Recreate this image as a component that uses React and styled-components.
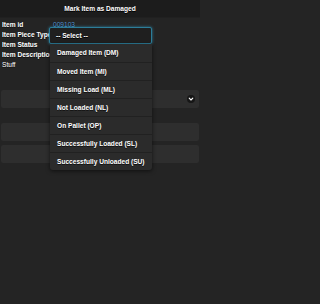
import React from 'react';
import styled, { createGlobalStyle } from 'styled-components';

const GlobalStyle = createGlobalStyle`
  html, body {
    margin: 0;
    padding: 0;
    background: #242424;
  }
  body {
    font-family: 'Liberation Sans', Arial, sans-serif;
    color: #ffffff;
  }
`;

const Page = styled.div`
  position: relative;
  width: 200px;
  min-height: 304px;
  background: #242424;
  overflow: hidden;
`;

const Header = styled.div`
  height: 17px;
  line-height: 18px;
  background: #1c1c1c;
  border-bottom: 1px solid #202020;
  text-align: center;
  font-size: 6.6px;
  font-weight: bold;
  text-shadow: 0 1px 0 #000;
`;

const Fields = styled.div`
  display: flex;
  flex-direction: column;
  padding: 2px 2px 0;
`;

const Row = styled.div`
  display: grid;
  grid-template-columns: ${(p) => (p.$full ? '1fr' : '49px 1fr')};
  column-gap: 2px;
  height: 10px;
  line-height: 10px;
  font-size: 6.6px;
`;

const Label = styled.div`
  font-weight: bold;
  white-space: nowrap;
  overflow: hidden;
  text-shadow: 0 1px 0 #111;
`;

const Value = styled.div`
  color: ${(p) => (p.$link ? '#4f8fcc' : '#ffffff')};
  white-space: nowrap;
  text-shadow: 0 1px 0 #111;
`;

const Controls = styled.div`
  display: flex;
  flex-direction: column;
  padding: 0 1px;
  margin-top: 20px;
`;

const Band = styled.div`
  display: flex;
  align-items: center;
  justify-content: flex-end;
  height: 18px;
  margin-top: ${(p) => p.$gap || 0}px;
  padding-right: 4px;
  background: #2e2e2e;
  border-radius: 2px;
`;

const ArrowDot = styled.span`
  display: flex;
  align-items: center;
  justify-content: center;
  width: 8px;
  height: 8px;
  border-radius: 50%;
  background: #161616;
`;

const Popup = styled.div`
  position: absolute;
  left: 49px;
  top: 27px;
  width: 103px;
`;

const SelectHead = styled.div`
  box-sizing: border-box;
  height: 17px;
  line-height: 15px;
  padding-left: 6px;
  background: #1f1f1f;
  border: 1px solid #2c7d99;
  border-radius: 2px;
  box-shadow: 0 0 3px rgba(50, 160, 200, 0.75);
  font-size: 6.6px;
  font-weight: bold;
  text-shadow: 0 1px 0 #000;
`;

const List = styled.ul`
  list-style: none;
  margin: 0 0 0 1px;
  padding: 0;
  width: 102px;
  background: #2b2b2b;
  border-radius: 0 0 3px 3px;
  box-shadow: 0 1px 4px rgba(0, 0, 0, 0.6);
`;

const Option = styled.li`
  box-sizing: border-box;
  height: 18px;
  line-height: 18px;
  padding-left: 7px;
  border-top: ${(p) => (p.$first ? 'none' : '1px solid #212121')};
  font-size: 6.6px;
  font-weight: bold;
  white-space: nowrap;
  text-shadow: 0 1px 0 #111;
`;

const options = [
  'Damaged Item (DM)',
  'Moved Item (MI)',
  'Missing Load (ML)',
  'Not Loaded (NL)',
  'On Pallet (OP)',
  'Successfully Loaded (SL)',
  'Successfully Unloaded (SU)',
];

const App = () => {
  return (
    <Page>
      <GlobalStyle />
      <Header>Mark Item as Damaged</Header>
      <Fields>
        <Row>
          <Label>Item id</Label>
          <Value $link>009103</Value>
        </Row>
        <Row>
          <Label>Item Piece Type</Label>
          <Value />
        </Row>
        <Row>
          <Label>Item Status</Label>
          <Value />
        </Row>
        <Row>
          <Label>Item Description</Label>
          <Value />
        </Row>
        <Row $full>
          <Value>Stuff</Value>
        </Row>
      </Fields>
      <Controls>
        <Band>
          <ArrowDot>
            <svg width="6" height="6" viewBox="0 0 6 6">
              <path d="M1.2 2.2 L3 4 L4.8 2.2" fill="none" stroke="#fff" strokeWidth="1.1" strokeLinecap="round" strokeLinejoin="round" />
            </svg>
          </ArrowDot>
        </Band>
        <Band $gap={15} />
        <Band $gap={4} />
      </Controls>
      <Popup>
        <SelectHead>-- Select --</SelectHead>
        <List>
          {options.map((o, i) => (
            <Option key={o} $first={i === 0}>{o}</Option>
          ))}
        </List>
      </Popup>
    </Page>
  );
};

export default App;
